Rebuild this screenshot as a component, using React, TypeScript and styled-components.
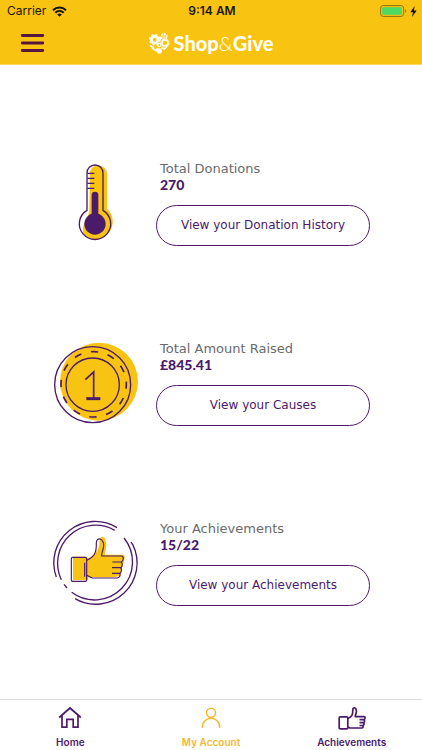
import React from "react";
import styled, { createGlobalStyle } from "styled-components";

const purple = "#4b1a6b";
const yellow = "#f8c311";

const GlobalStyle = createGlobalStyle`
  * { box-sizing: border-box; }
  body { margin: 0; background: #fff; }
`;

const Screen = styled.div`
  min-height: 100vh;
  display: flex;
  flex-direction: column;
  font-family: "DejaVu Sans", Verdana, sans-serif;
`;

const TopBar = styled.header`
  background: ${yellow};
  border-bottom: 1px solid #fad763;
`;

const ThreeColumns = styled.div`
  display: grid;
  grid-template-columns: 1fr auto 1fr;
  align-items: center;
`;

const StatusRow = styled(ThreeColumns)`
  height: 22px;
  padding: 0 5px 0 7px;
  font: 400 12px/22px Inter, sans-serif;
  color: #1c1705;
`;

const StatusGroup = styled.div<{ $end?: boolean }>`
  display: flex;
  align-items: center;
  gap: ${(p) => (p.$end ? 3 : 6)}px;
  justify-content: ${(p) => (p.$end ? "flex-end" : "flex-start")};
`;

const Clock = styled.time`
  font-weight: 600;
`;

const TitleRow = styled(ThreeColumns)`
  height: 42px;
  padding: 0 20px;
`;

const MenuButton = styled.button`
  justify-self: start;
  display: flex;
  padding: 0;
  border: 0;
  background: none;
  cursor: pointer;
`;

const Brand = styled.a`
  display: flex;
  align-items: center;
  gap: 4px;
  color: #fffdf4;
  text-decoration: none;
  font: 900 20px/24px Lato, sans-serif;
`;

const Ampersand = styled.span`
  font-weight: 300;
`;

const Main = styled.main`
  flex: 1;
  display: flex;
  flex-direction: column;
  justify-content: center;
  padding-top: 6px;
`;

const StatRow = styled.section`
  display: flex;
  align-items: center;
  gap: 11px;
  min-height: 180px;
  padding: 0 52px 0 45px;
`;

const StatBody = styled.div`
  flex: 1;
  display: flex;
  flex-direction: column;
  padding-bottom: 4px;
`;

const StatLabel = styled.h2`
  margin: 0;
  padding-left: 4px;
  font-size: 13px;
  line-height: 16px;
  font-weight: 400;
  color: #6b6b6b;
`;

const StatValue = styled.p`
  margin: 0 0 12px;
  padding-left: 4px;
  font: 900 14px/16px Lato, sans-serif;
  color: ${purple};
`;

const PillButton = styled.button`
  height: 41px;
  border: 1px solid ${purple};
  border-radius: 21px;
  background: #fff;
  color: ${purple};
  font: 400 12px/16px "DejaVu Sans", Verdana, sans-serif;
  cursor: pointer;
`;

const TabBar = styled.nav`
  display: flex;
  height: 51px;
  border-top: 1px solid #dcdcdc;
  background: #fff;
`;

const Tab = styled.a<{ $active?: boolean }>`
  flex: 1;
  display: flex;
  flex-direction: column;
  align-items: center;
  gap: 5px;
  padding-top: 6px;
  color: ${(p) => (p.$active ? "#f3b92e" : purple)};
  text-decoration: none;
  font: 600 10px/14px Inter, sans-serif;
`;

const Wifi = () => (
  <svg width="15" height="11" viewBox="0 0 15 11" fill="none" stroke="#111" strokeWidth="2" aria-hidden="true">
    <path d="M1 4.2C4.7.6 10.3.6 14 4.2M3.3 6.7c2.4-2.3 6-2.3 8.4 0" />
    <path d="M5.2 8.4c1.3-1.2 3.3-1.2 4.6 0L7.5 10.8z" fill="#111" stroke="none" />
  </svg>
);

const Battery = () => (
  <svg width="27" height="12" viewBox="0 0 27 12" aria-hidden="true">
    <rect x=".6" y=".6" width="23" height="10.8" rx="2.5" fill="none" stroke="#8a7312" />
    <rect x="2.2" y="2.2" width="19.8" height="7.6" rx="1" fill="#4cd964" />
    <path d="M25 4c1.5.5 1.5 3.5 0 4z" fill="#8a7312" />
  </svg>
);

const Bolt = () => (
  <svg width="7" height="11" viewBox="0 0 7 11" aria-hidden="true">
    <path d="M4.7 0 .3 6.2h2.8L2 11l4.7-6.5H3.8z" fill="#111" />
  </svg>
);

const MenuIcon = () => (
  <svg width="25" height="20" viewBox="0 0 25 20" stroke="#57163f" strokeWidth="2.8" strokeLinecap="round" aria-hidden="true">
    <path d="M2.2 2.5h20.6M2.2 10h20.6M2.2 17.5h20.6" />
  </svg>
);

const HeartGears = () => (
  <svg width="21" height="21" viewBox="0 0 63 63" fill="none" stroke="#fffdf4" aria-hidden="true">
    <circle cx="17" cy="20" r="10" strokeWidth="9" />
    <circle cx="17" cy="20" r="15" strokeWidth="5" strokeDasharray="6 5.8" />
    <circle cx="45" cy="11" r="8" strokeWidth="5" strokeDasharray="7 2" />
    <circle cx="45" cy="11" r="3" strokeWidth="2" />
    <circle cx="48" cy="30" r="9" strokeWidth="5" />
    <circle cx="48" cy="30" r="13" strokeWidth="3" strokeDasharray="4 4" />
    <circle cx="31" cy="36" r="5" strokeWidth="4" />
    <path d="M3 37l11 8M9 45l12 8 5-8M33 22l3-9M37 44l9 4 8-7" strokeWidth="5" />
    <circle cx="31" cy="54" r="7" fill="#fffdf4" strokeWidth="3" />
  </svg>
);

const Art = ({ children }: { children: React.ReactNode }) => (
  <svg width="100" height="100" viewBox="0 0 300 300" fill="none" stroke={purple} strokeWidth="4" aria-hidden="true">
    {children}
  </svg>
);

const Thermometer = () => (
  <Art>
    <path d="M135 50a26 26 0 0 1 51 7V161A46 46 0 1 1 116 239C107 202 133 190 133 164z" fill={yellow} stroke="none" />
    <path d="M126 166V54a23 23 0 0 1 48 0V166A47 47 0 1 1 126 166z" />
    <path d="M127 55h21M127 70h21M127 85h21M127 100h21" />
    <circle cx="150" cy="207" r="32" fill={purple} stroke="none" />
    <path d="M150 200v-80" strokeWidth="20" strokeLinecap="round" />
  </Art>
);

const Coin = () => (
  <Art>
    <circle cx="162" cy="140" r="117" fill={yellow} stroke="none" />
    <circle cx="143" cy="149" r="114" />
    <circle cx="143" cy="149" r="80" />
    <circle cx="146" cy="148" r="98" strokeWidth="5" strokeDasharray="22 29.3" strokeDashoffset="9" />
    <path d="M121 134l25-23v77" strokeWidth="5" />
    <path d="M124 191h42" strokeWidth="9" />
  </Art>
);

const ThumbBadge = () => (
  <Art>
    <g transform="translate(0 -9)">
      <path d="M84 134h41v6c19-7 33-20 37-38 2-14 1-24 7-27 8-3 15 9 15 22 0 15-5 23-4 31h56q5 3 2 16l-7 25-6 22-18 5h-77v8H84z" fill={yellow} stroke="none" />
      <path d="M216 47A124 124 0 0 0 34 195M209 55A114 114 0 0 0 49 203" />
      <path d="M237 78A114 114 0 0 1 80 241M263 97A124 124 0 0 1 90 260M258 90l5 8M57 217l9 11" />
      <g strokeWidth="3.5">
        <rect x="79" y="136" width="46" height="72" rx="4" />
        <path d="M125 145c22-10 30-21 29-53 1-18 22-14 22 9 0 12-7 19-6 31h60c7 0 6 16-1 18q6 9-1 17 4 9-3 17 2 11-8 14h-75l-17-8" strokeLinejoin="round" />
        <path d="M229 150h-27M228 167h-27M226 184h-25M119 152v42" />
      </g>
    </g>
  </Art>
);

const HomeIcon = () => (
  <svg width="24" height="24" viewBox="0 0 24 24" fill="none" stroke="currentColor" strokeWidth="1.7" aria-hidden="true">
    <path d="M1.2 11.5 12 2l10.8 9.5M4 9.5V21.2h4.8v-7.8h6.4v7.8H20V9.5" />
  </svg>
);

const PersonIcon = () => (
  <svg width="24" height="24" viewBox="0 0 24 24" fill="none" stroke="currentColor" strokeWidth="1.5" aria-hidden="true">
    <circle cx="12" cy="6.8" r="4.5" />
    <path d="M3.2 21.8c0-12.6 17.6-12.6 17.6 0" />
  </svg>
);

const ThumbIcon = () => (
  <svg width="28" height="24" viewBox="0 0 28 24" fill="none" stroke="currentColor" strokeWidth="1.7" strokeLinejoin="round" aria-hidden="true">
    <rect x="1.2" y="10.8" width="8.6" height="12" rx="1" />
    <path d="M9.8 12.5c4.2-1.7 5.1-3.7 5-8.6-.1-3.5 3.9-2.5 3.6 1.7-.1 2.1-1.1 3.1-1.1 5h8.6c1.8 0 1.4 2.7 0 3 1 1.2.8 2.3-.3 3 .8 1.2.5 2.2-.6 2.9.4 1.8-.4 2.5-1.7 2.5H12l-2.2-.9M26 13.6h-4.5M25.6 16.6h-4.1M25 19.5h-3.5" />
  </svg>
);

const stats = [
  { label: "Total Donations", value: "270", action: "View your Donation History", icon: <Thermometer /> },
  { label: "Total Amount Raised", value: "£845.41", action: "View your Causes", icon: <Coin /> },
  { label: "Your Achievements", value: "15/22", action: "View your Achievements", icon: <ThumbBadge /> },
];

export default function App() {
  return (
    <Screen>
      <GlobalStyle />
      <TopBar>
        <StatusRow>
          <StatusGroup>
            Carrier <Wifi />
          </StatusGroup>
          <Clock>9:14 AM</Clock>
          <StatusGroup $end>
            <Battery />
            <Bolt />
          </StatusGroup>
        </StatusRow>
        <TitleRow>
          <MenuButton aria-label="Menu">
            <MenuIcon />
          </MenuButton>
          <Brand href="#">
            <HeartGears />
            <span>
              Shop<Ampersand>&amp;</Ampersand>Give
            </span>
          </Brand>
        </TitleRow>
      </TopBar>
      <Main>
        {stats.map((s) => (
          <StatRow key={s.label}>
            {s.icon}
            <StatBody>
              <StatLabel>{s.label}</StatLabel>
              <StatValue>{s.value}</StatValue>
              <PillButton>{s.action}</PillButton>
            </StatBody>
          </StatRow>
        ))}
      </Main>
      <TabBar>
        <Tab href="#home">
          <HomeIcon />
          Home
        </Tab>
        <Tab href="#account" $active aria-current="page">
          <PersonIcon />
          My Account
        </Tab>
        <Tab href="#achievements">
          <ThumbIcon />
          Achievements
        </Tab>
      </TabBar>
    </Screen>
  );
}
